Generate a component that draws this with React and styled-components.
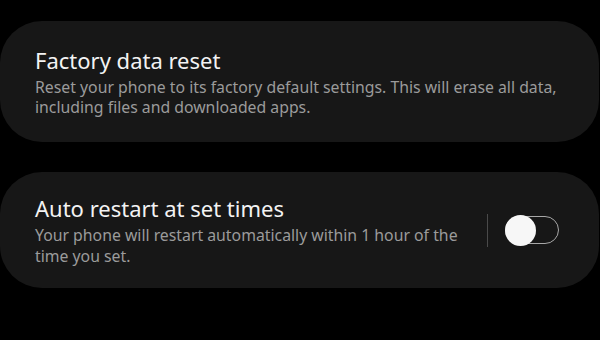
import React, { useState } from "react";
import styled, { createGlobalStyle } from "styled-components";

const Global = createGlobalStyle`
  html, body {
    margin: 0;
    background: #000;
  }
  body {
    width: 600px;
    height: 340px;
    overflow: hidden;
    font-family: "Noto Sans", Roboto, sans-serif;
  }
`;

const Page = styled.div`
  display: flex;
  flex-direction: column;
  gap: 30px;
  padding: 21px 1px 0 0;
`;

const Card = styled.div`
  display: flex;
  align-items: center;
  background: #171717;
  border-radius: 42px;
  height: ${({ h }) => h}px;
  padding: 0 40px 0 35px;
  box-sizing: border-box;
`;

const Texts = styled.div`
  flex: 1;
  display: flex;
  flex-direction: column;
`;

const Title = styled.div`
  color: #f3f3f3;
  font-size: 22px;
  line-height: 28px;
`;

const Sub = styled.div`
  color: #9b9b9b;
  font-size: 15.8px;
  line-height: 20.5px;
  margin-top: 3px;
  max-width: ${({ w }) => w}px;
`;

const Divider = styled.div`
  width: 1px;
  height: 33px;
  background: #4a4a4a;
  margin: 0 17px 0 20px;
`;

const Track = styled.button`
  position: relative;
  width: 54px;
  height: 28px;
  border-radius: 14px;
  border: 1.5px solid #a8a8a8;
  background: transparent;
  padding: 0;
  cursor: pointer;
`;

const Knob = styled.span`
  position: absolute;
  top: -2.5px;
  left: ${({ on }) => (on ? "23px" : "-1.5px")};
  width: 31px;
  height: 31px;
  border-radius: 50%;
  background: #f7f7f7;
`;

export default function App() {
  const [on, setOn] = useState(false);
  return (
    <>
      <Global />
      <Page>
        <Card h={121}>
          <Texts>
            <Title>Factory data reset</Title>
            <Sub w={545}>
              Reset your phone to its factory default settings. This will erase all data,
              including files and downloaded apps.
            </Sub>
          </Texts>
        </Card>
        <Card h={116}>
          <Texts>
            <Title>Auto restart at set times</Title>
            <Sub w={440}>
              Your phone will restart automatically within 1 hour of the time you set.
            </Sub>
          </Texts>
          <Divider />
          <Track onClick={() => setOn(!on)}>
            <Knob on={on ? 1 : 0} />
          </Track>
        </Card>
      </Page>
    </>
  );
}
